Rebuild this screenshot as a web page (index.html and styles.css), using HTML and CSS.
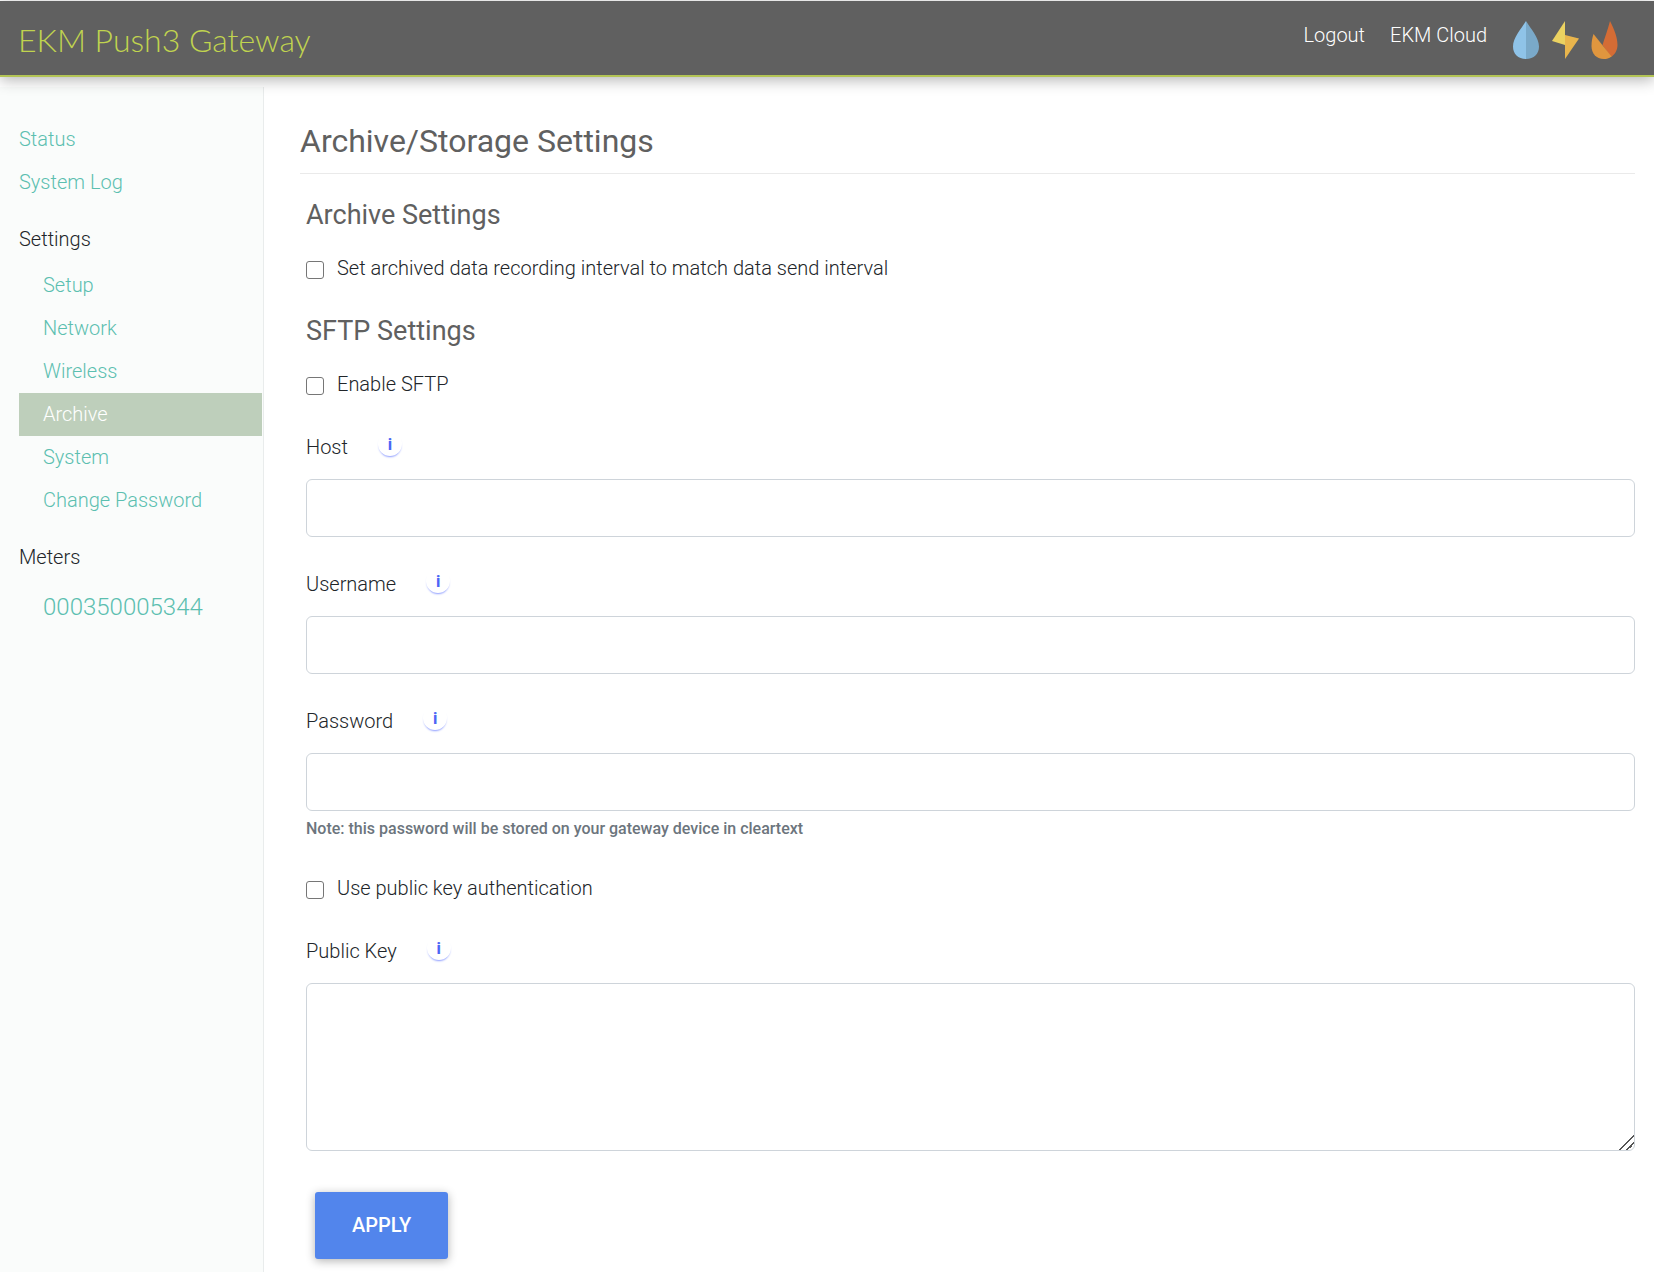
FILE: index.html
```html
<!DOCTYPE html>
<html lang="en">
<head>
    <meta charset="UTF-8">
    <meta name="viewport" content="width=device-width, initial-scale=1">
    <title>EKM Push3 Gateway</title>
    <link rel="stylesheet" href="styles.css">
</head>
<body>
    <header class="topbar">
        <a class="brand" href="#">EKM Push3 Gateway</a>
        <nav class="top-links">
            <a href="#">Logout</a>
            <a href="#">EKM Cloud</a>
            <span class="utilities">
                <svg width="28" height="40" viewBox="0 0 28 40" aria-hidden="true">
                    <path fill="#8fc3e8" d="M14 1C9 9 1 18 1 26.500C1 34 6 39 14 39Z"/>
                    <path fill="#7aa9c9" d="M14 1C19 9 27 18 27 26.500C27 34 22 39 14 39Z"/>
                </svg>
                <svg width="28" height="40" viewBox="0 0 28 40" aria-hidden="true">
                    <path fill="#ebd261" d="M14 1V25L1 21Z"/>
                    <path fill="#e9b54c" d="M14 15L28 18.500L14 39Z"/>
                </svg>
                <svg width="28" height="40" viewBox="0 0 28 40" aria-hidden="true">
                    <path fill="#d46c35" d="M20 1C24 9 27.500 17 27.500 25C27.500 30 25 34.500 21 37L12.500 25C15 17 18 9 20 1Z"/>
                    <path fill="#e0963e" d="M3.500 14L21.500 36.500C19 38.500 16.500 39 14 39C6 39 1.500 33 1.500 26C1.500 21 2.500 17 3.500 14Z"/>
                </svg>
            </span>
        </nav>
    </header>

    <div class="page">
        <nav class="sidebar">
            <a class="side-link" href="#">Status</a>
            <a class="side-link" href="#">System Log</a>

            <p class="side-title">Settings</p>
            <div class="side-group">
                <a class="side-link" href="#">Setup</a>
                <a class="side-link" href="#">Network</a>
                <a class="side-link" href="#">Wireless</a>
                <a class="side-link active" href="#">Archive</a>
                <a class="side-link" href="#">System</a>
                <a class="side-link" href="#">Change Password</a>
            </div>

            <p class="side-title">Meters</p>
            <div class="side-group">
                <a class="side-link meter" href="#">000350005344</a>
            </div>
        </nav>

        <main class="content">
            <h1>Archive/Storage Settings</h1>

            <form class="settings">
                <h2>Archive Settings</h2>
                <div class="check">
                    <input type="checkbox" id="match-interval">
                    <label for="match-interval">Set archived data recording interval to match data send interval</label>
                </div>

                <h2>SFTP Settings</h2>
                <div class="check">
                    <input type="checkbox" id="enable-sftp">
                    <label for="enable-sftp">Enable SFTP</label>
                </div>

                <div class="field">
                    <div class="field-head">
                        <label for="host">Host</label>
                        <button type="button" class="info" aria-label="About host">i</button>
                    </div>
                    <input type="text" id="host">
                </div>

                <div class="field">
                    <div class="field-head">
                        <label for="username">Username</label>
                        <button type="button" class="info" aria-label="About username">i</button>
                    </div>
                    <input type="text" id="username">
                </div>

                <div class="field">
                    <div class="field-head">
                        <label for="password">Password</label>
                        <button type="button" class="info" aria-label="About password">i</button>
                    </div>
                    <input type="password" id="password">
                    <small class="note">Note: this password will be stored on your gateway device in cleartext</small>
                </div>

                <div class="check">
                    <input type="checkbox" id="use-key">
                    <label for="use-key">Use public key authentication</label>
                </div>

                <div class="field">
                    <div class="field-head">
                        <label for="public-key">Public Key</label>
                        <button type="button" class="info" aria-label="About public key">i</button>
                    </div>
                    <textarea id="public-key" rows="5"></textarea>
                </div>

                <button type="submit" class="apply">Apply</button>
            </form>
        </main>
    </div>
</body>
</html>
```
FILE: styles.css
```css
:root {
    --bar: #606060;
    --lime: #c0d44f;
    --teal: #5cbfb0;
    --active: #becfbb;
    --text: #212529;
    --heading: #606060;
    --border: #ced4da;
    --blue: #5285ec;
    --info: #4c66f5;
}

* {
    box-sizing: border-box;
}

body {
    margin: 0;
    padding-top: 1px;
    min-height: 100vh;
    display: flex;
    flex-direction: column;
    background: #fff;
    color: var(--text);
    font-family: Roboto, "Liberation Sans", sans-serif;
    font-size: 20px;
    font-weight: 300;
    line-height: 30px;
}

a {
    text-decoration: none;
}

/* top bar */
.topbar {
    display: flex;
    justify-content: space-between;
    align-items: center;
    height: 76px;
    padding: 0 36px 0 18px;
    background: var(--bar);
    border-bottom: 2px solid #b3c455;
    box-shadow: 0 3px 14px rgba(0, 0, 0, 0.3);
    position: relative;
    z-index: 1;
}

.brand {
    color: var(--lime);
    font-family: Lato, sans-serif;
    font-size: 32px;
    font-weight: 300;
    padding-top: 4px;
}

.top-links {
    display: flex;
    gap: 25px;
}

.top-links a {
    color: #fff;
    line-height: 38px;
}

.utilities {
    display: flex;
    gap: 11px;
    padding-top: 4px;
}

/* sidebar */
.page {
    flex: 1;
    display: flex;
    padding-top: 10px;
}

.sidebar {
    flex: none;
    width: 264px;
    padding: 31px 1px 0 19px;
    background: #fafcfb;
    border-right: 1px solid #e9ecec;
}

.side-link {
    display: block;
    line-height: 43px;
    color: var(--teal);
}

.side-title {
    margin: 14px 0 3px;
    line-height: 43px;
}

.side-group .side-link {
    padding-left: 24px;
}

.side-link.active {
    background: var(--active);
    color: #fff;
}

.side-link.meter {
    font-size: 24px;
    line-height: 50px;
}

/* content */
.content {
    flex: 1;
    min-width: 0;
    padding: 34px 19px 15px 36px;
}

h1,
h2 {
    margin: 0;
    color: var(--heading);
    font-weight: 400;
}

h1 {
    padding-bottom: 12px;
    border-bottom: 1px solid #eaeaea;
    font-size: 32px;
    line-height: 40px;
}

h2 {
    margin-bottom: 22px;
    font-size: 27px;
    line-height: 32px;
}

.settings {
    padding: 25px 0 0 6px;
}

.check {
    display: flex;
    align-items: center;
    gap: 13px;
    margin-bottom: 32px;
}

.check input {
    appearance: none;
    width: 18px;
    height: 18px;
    margin: 3px 0 0;
    border: 1px solid #767676;
    border-radius: 3px;
    background: #fff;
}

.check input:checked {
    background: var(--blue);
}

.field {
    margin-bottom: 32px;
}

.field-head {
    display: flex;
    align-items: center;
    gap: 30px;
    margin-bottom: 17px;
}

.info {
    width: 24px;
    height: 24px;
    margin-bottom: 6px;
    padding: 0;
    border: 0;
    border-radius: 50%;
    background: #fff;
    box-shadow: 0 2px 2px -1px #8c9bff;
    color: var(--info);
    font-family: "Open Sans", sans-serif;
    font-size: 16px;
    font-weight: 700;
    line-height: 24px;
}

.check + .field {
    margin-top: 33px;
}

.field input,
.field textarea {
    display: block;
    width: 100%;
    padding: 12px 16px;
    border: 1px solid var(--border);
    border-radius: 6px;
    background: #fff;
    color: var(--text);
    font: inherit;
}

.field input {
    height: 58px;
}

.field textarea {
    height: 168px;
    resize: vertical;
}

/* two diagonal grip lines */
.field textarea::-webkit-resizer {
    background: linear-gradient(135deg, transparent 48%, #555 48%, #555 55%, transparent 55%, transparent 73%, #555 73%, #555 80%, transparent 80%);
}

.note {
    display: block;
    margin-top: 6px;
    color: #6c757d;
    font-size: 16px;
    font-weight: 500;
    line-height: 24px;
}

.apply {
    display: block;
    margin: 41px 0 0 9px;
    padding: 0 37px;
    border: 0;
    border-radius: 3px;
    background: var(--blue);
    box-shadow: 0 2px 10px rgba(0, 0, 0, 0.3);
    color: #fff;
    font-family: inherit;
    font-size: 20px;
    font-weight: 500;
    line-height: 67px;
    text-transform: uppercase;
}
```
